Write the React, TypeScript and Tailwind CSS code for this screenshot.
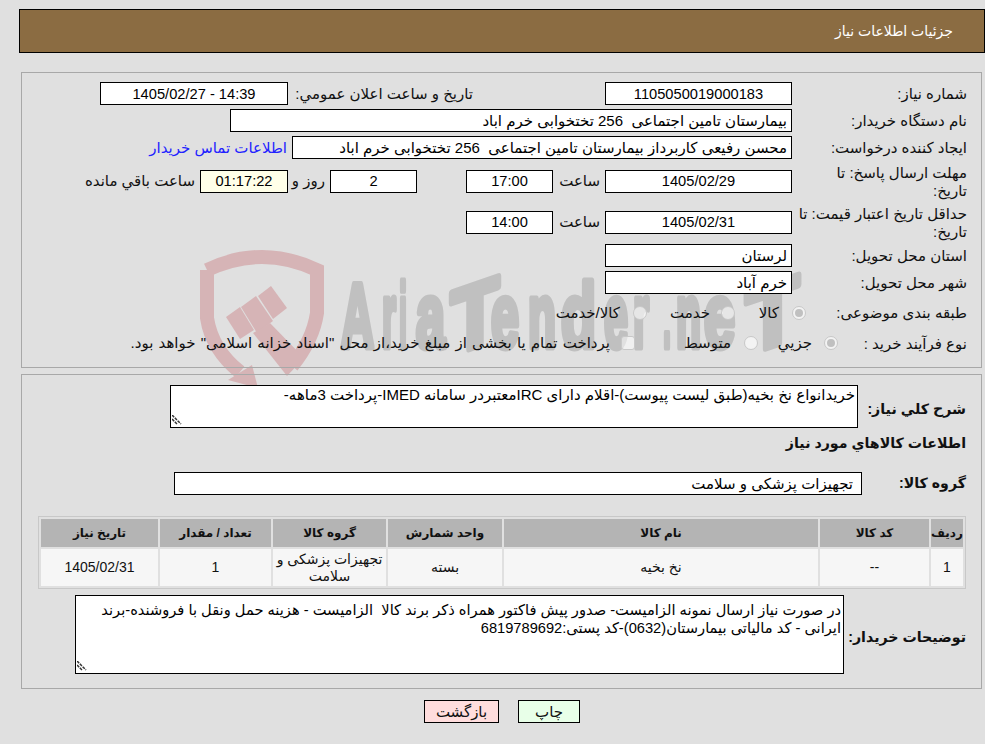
import type { ReactNode } from "react";

const box = "h-[23px] border border-black px-1 text-black outline-none";
const numField = `${box} bg-white text-center text-[14.67px]`;
const textField = `${box} bg-white text-right text-[15px]`;
const note =
  "block resize-none rounded-none border border-black bg-white px-[2px] leading-[18px] text-black outline-none";
const strong = "shrink-0 text-[14.2px] font-bold";

const goods = [
  { w: "w-[32px]", head: "ردیف", val: "1" },
  { w: "w-[109px]", head: "کد کالا", val: "--" },
  { w: "w-[314px]", head: "نام کالا", val: "نخ بخیه" },
  { w: "w-[114px]", head: "واحد شمارش", val: "بسته" },
  { w: "w-[113px]", head: "گروه کالا", val: "تجهیزات پزشکی و سلامت" },
  { w: "w-[111px]", head: "تعداد / مقدار", val: "1" },
  { w: "w-[117px]", head: "تاریخ نیاز", val: "1405/02/31" },
];

// x / width of each watermark letter, in page pixels
const mark = [
  { c: "A", x: 341, w: 33 },
  { c: "r", x: 382, w: 14 },
  { c: "i", x: 399, w: 8 },
  { c: "a", x: 416, w: 29 },
  { c: "T", x: 451, w: 48, slant: true },
  { c: "e", x: 491, w: 28 },
  { c: "n", x: 528, w: 28 },
  { c: "d", x: 561, w: 35 },
  { c: "e", x: 604, w: 24 },
  { c: "r", x: 633, w: 16 },
  { c: ".", x: 663, w: 8 },
  { c: "n", x: 676, w: 25 },
  { c: "e", x: 704, w: 31 },
  { c: "T", x: 746, w: 53, slant: true },
];

function Row({ label, children, h }: { label: ReactNode; children?: ReactNode; h: string }) {
  return (
    <div className={`flex items-center ${h}`}>
      <label className="w-[175px] shrink-0 pt-px leading-[18px]">{label}</label>
      {children}
    </div>
  );
}

function Radio({ on }: { on?: boolean }) {
  return (
    <span className="flex h-[14px] w-[14px] shrink-0 items-center justify-center rounded-full border border-[#c8c8c8] bg-white/60">
      {on && <span className="h-[8px] w-[8px] rounded-full bg-[#c0c0c0]" />}
    </span>
  );
}

function Grip() {
  return (
    <svg className="absolute bottom-[3px] left-[2px]" width="10" height="10" viewBox="0 0 10 10">
      <path d="M0 0 L9 9 M0 4 L5 9" stroke="#333" strokeWidth="1.5" strokeDasharray="3 1" fill="none" />
    </svg>
  );
}

// watermark behind the form
function Watermark() {
  return (
    <svg className="pointer-events-none absolute left-[190px] top-[240px]" width="625" height="170" viewBox="190 240 625 170">
      <g fill="#d6b4b6">
        <path d="M207 270 Q262 244 317 270 L317 313 Q313 340 292 366 M207 270 L207 318 Q212 350 240 372" fill="none" stroke="#d6b4b6" strokeWidth="14" />
        <path d="M226 317 L240 307 L254 330 L240 339 Z" />
        <path d="M241 307 L256 296 L273 321 L257 333 Z" />
        <path d="M258 296 L271 286 L287 308 L273 319 Z" />
        <path d="M270 323 L253 333 L287 376 L304 358 Z" />
        <path d="M252 365 L258 388 L228 380 Z" />
      </g>
      {mark.map((m, i) => (
        <text
          key={i}
          transform={m.slant ? `translate(${m.x} 355) skewY(-19)` : `translate(${m.x} 347)`}
          direction="ltr"
          textLength={m.w}
          lengthAdjust="spacingAndGlyphs"
          fontSize="90"
          fontWeight="700"
          fontFamily="'Liberation Sans', sans-serif"
          fill="#c0c0c0"
          stroke="#c0c0c0"
          strokeWidth="7"
          strokeLinejoin="round"
        >
          {m.c}
        </text>
      ))}
    </svg>
  );
}

export default function App() {
  return (
    <div
      dir="rtl"
      className="relative min-h-screen bg-[#e0e0e0] text-[15px] text-[#111] [font-family:'Liberation_Sans','DejaVu_Sans',sans-serif]"
    >
      <Watermark />

      <div className="relative pl-[19px] pt-[9px]">
        <div className="flex h-[44px] w-[966px] items-center border border-black bg-[#8b6c42] pr-[31px] text-[14px] text-white">
          جزئیات اطلاعات نیاز
        </div>

        <div className="mr-[3px] mt-[19px] h-[296px] w-[961px] border border-[#a8a8a8] pr-[14px] pt-[9px]">
          <Row label="شماره نیاز:" h="h-[23px]">
            <input readOnly value="1105050019000183" className={`${numField} w-[187px]`} />
            <span className="mr-[132px] w-[180px] whitespace-nowrap pt-px">تاریخ و ساعت اعلان عمومي:</span>
            <input readOnly value="14:39 - 1405/02/27" className={`${numField} mr-[5px] w-[188px]`} />
          </Row>
          <Row label="نام دستگاه خریدار:" h="mt-[4px] h-[23px]">
            <input readOnly value="بیمارستان تامین اجتماعی  256 تختخوابی خرم اباد" className={`${textField} w-[562px]`} />
          </Row>
          <Row label="ایجاد کننده درخواست:" h="mt-[4px] h-[23px]">
            <input readOnly value="محسن رفیعی کاربرداز بیمارستان تامین اجتماعی  256 تختخوابی خرم اباد" className={`${textField} w-[500px]`} />
            <a className="mr-[5px] pt-px text-[#2222ff]">اطلاعات تماس خریدار</a>
          </Row>
          <Row label={<>مهلت ارسال پاسخ: تا<br />تاریخ:</>} h="mt-[4px] h-[36px]">
            <input readOnly value="1405/02/29" className={`${numField} w-[187px]`} />
            <span className="mr-[5px] w-[47px] pt-px">ساعت</span>
            <input readOnly value="17:00" className={`${numField} w-[87px]`} />
            <input readOnly value="2" className={`${numField} mr-[49px] w-[87px]`} />
            <span className="mr-[5px] w-[37px] pt-px">روز و</span>
            <input readOnly value="01:17:22" className={`${box} w-[88px] bg-[#ffffe8] text-center text-[14.67px]`} />
            <span className="mr-[5px] pt-px">ساعت باقي مانده</span>
          </Row>
          <Row label={<>حداقل تاریخ اعتبار قیمت: تا<br />تاریخ:</>} h="mt-[5px] h-[36px]">
            <input readOnly value="1405/02/31" className={`${numField} w-[187px]`} />
            <span className="mr-[5px] w-[47px] pt-px">ساعت</span>
            <input readOnly value="14:00" className={`${numField} w-[87px]`} />
          </Row>
          <Row label="استان محل تحویل:" h="mt-[4px] h-[23px]">
            <input readOnly value="لرستان" className={`${textField} w-[187px]`} />
          </Row>
          <Row label="شهر محل تحویل:" h="mt-[4px] h-[23px]">
            <input readOnly value="خرم آباد" className={`${textField} w-[187px]`} />
          </Row>
          <Row label="طبقه بندی موضوعی:" h="mt-[6px] h-[25px]">
            <span className="-mr-[14px] flex">
              <Radio on />
            </span>
            <span className="mr-[13px] w-[44px] pt-px">کالا</span>
            <Radio />
            <span className="mr-[11px] w-[63px] pt-px">خدمت</span>
            <Radio />
            <span className="mr-[13px] pt-px">کالا/خدمت</span>
          </Row>
          <Row label="نوع فرآیند خرید :" h="mt-[5px] h-[26px]">
            <span className="-mr-[46px] flex">
              <Radio on />
            </span>
            <span className="mr-[12px] w-[54px] pt-px">جزيي</span>
            <Radio />
            <span className="mr-[13px] w-[96px] pt-px">متوسط</span>
            <span className="h-[14px] w-[14px] shrink-0 rounded-[3px] border border-[#c8c8c8] bg-white/50" />
            <span className="mr-[11px] whitespace-nowrap pt-px [word-spacing:1px]">پرداخت تمام یا بخشی از مبلغ خرید،از محل "اسناد خزانه اسلامی" خواهد بود.</span>
          </Row>
        </div>

        <div className="mr-[3px] mt-[6px] h-[315px] w-[961px] border border-[#a8a8a8] pr-[15px] pt-[10px]">
          <div className="flex">
            <label className={`${strong} mt-[14px] w-[108px]`}>شرح کلي نیاز:</label>
            <div className="relative">
              <textarea
                readOnly
                value="خریدانواع نخ بخیه(طبق لیست پیوست)-اقلام دارای IRCمعتبردر سامانه IMED-پرداخت 3ماهه-"
                className={`${note} h-[43px] w-[688px] text-[15px]`}
              />
              <Grip />
            </div>
          </div>
          <div className={`${strong} mt-[6px] h-[18px] leading-[18px]`}>اطلاعات کالاهاي مورد نیاز</div>
          <div className="mt-[20px] flex items-center">
            <label className={`${strong} w-[104px]`}>گروه کالا:</label>
            <input readOnly value="تجهیزات پزشکی و سلامت" className={`${textField} w-[688px] pr-[8px]`} />
          </div>
          <table className="mt-[21px] w-[928px] table-fixed border-separate border-spacing-[2px] border border-[#c8c8c8] text-center text-[14px]">
            <thead>
              <tr>
                {goods.map((g) => (
                  <th key={g.head} className={`${g.w} h-[28px] bg-[#b4b4b4] p-0 text-[12px] font-bold`}>
                    {g.head}
                  </th>
                ))}
              </tr>
            </thead>
            <tbody>
              <tr>
                {goods.map((g) => (
                  <td key={g.head} className="h-[37px] bg-[#f6f6f6] px-[1px] py-0 leading-[17px]">
                    {g.val}
                  </td>
                ))}
              </tr>
            </tbody>
          </table>
          <div className="mt-[6px] flex">
            <label className={`${strong} mt-[32px] w-[122px]`}>توضیحات خریدار:</label>
            <div className="relative">
              <textarea
                readOnly
                value="در صورت نیاز ارسال نمونه الزامیست- صدور پیش فاکتور همراه ذکر برند کالا  الزامیست - هزینه حمل ونقل با فروشنده-برند ایرانی - کد مالیاتی بیمارستان(0632)-کد پستی:6819789692"
                className={`${note} h-[79px] w-[769px] pt-[5px] text-[14.67px]`}
              />
              <Grip />
            </div>
          </div>
        </div>

        <div className="mt-[11px] flex w-[966px] justify-center gap-[19px]">
          <button className="h-[23px] w-[62px] border border-black bg-[#e8ffe8]">چاپ</button>
          <button className="h-[23px] w-[75px] border border-black bg-[#ffdddd]">بازگشت</button>
        </div>
      </div>
    </div>
  );
}
